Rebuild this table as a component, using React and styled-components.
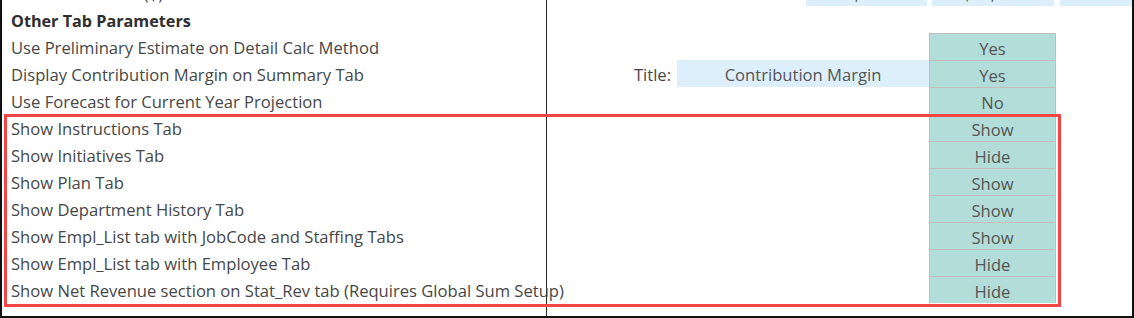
import React from "react";
import styled, { createGlobalStyle } from "styled-components";

const Global = createGlobalStyle`
  html, body { margin: 0; padding: 0; background: #fff; }
  body { font-family: "Open Sans", "Noto Sans", sans-serif; }
`;

const Frame = styled.div`
  width: 1134px;
  height: 318px;
  box-sizing: border-box;
  border-left: 2px solid #111;
  border-right: 2px solid #111;
  border-bottom: 2px solid #111;
  overflow: hidden;
  background: #fff;
  display: flex;
  flex-direction: column;
`;

const Row = styled.div`
  display: grid;
  grid-template-columns: 545px 382px 127px 1fr;
  height: 27px;
  flex: none;
  margin-top: ${(p) => p.$offset || 0}px;
`;

const Label = styled.div`
  border-right: 1px solid #2a2a2a;
  padding-left: 9px;
  padding-top: 2px;
  box-sizing: border-box;
  display: flex;
  align-items: center;
  font-size: ${(p) => (p.$bold ? "16.2px" : "16.6px")};
  letter-spacing: 0;
  color: ${(p) => (p.$bold ? "#2e2e2e" : "#474747")};
  font-weight: ${(p) => (p.$bold ? 700 : 400)};
  white-space: nowrap;
  overflow: visible;
  position: relative;
  z-index: 0;
`;

const Middle = styled.div`
  display: grid;
  grid-template-columns: 1fr ${(p) => (p.$narrow ? "123px" : "252px")};
  align-items: stretch;
  position: relative;
  z-index: 1;
`;

const TitleText = styled.div`
  display: flex;
  align-items: center;
  justify-content: flex-end;
  padding-right: 6px;
  padding-top: 2px;
  font-size: 16.6px;
  color: #474747;
`;

const BlueCell = styled.div`
  background: ${(p) => (p.$empty ? "transparent" : "#ddeffb")};
  display: flex;
  align-items: center;
  justify-content: center;
  padding-top: 2px;
  font-size: 16.6px;
  color: #555;
  margin-right: ${(p) => (p.$top ? "2px" : "0")};
`;

const ValueCell = styled.div`
  background: ${(p) => (p.$empty ? "transparent" : p.$blue ? "#ddeffb" : "#b2ddd9")};
  border: ${(p) => (p.$empty || p.$blue ? "none" : "1px solid #c3bcbc")};
  border-bottom: none;
  margin-left: ${(p) => (p.$blue ? "3px" : "0")};
  margin-right: ${(p) => (p.$blue ? "2px" : "0")};
  box-sizing: border-box;
  display: flex;
  align-items: center;
  justify-content: center;
  padding-top: 2px;
  font-size: 16.6px;
  color: #555;
`;

const RestCell = styled.div`
  background: ${(p) => (p.$blue ? "#ddeffb" : "transparent")};
  margin-left: ${(p) => (p.$blue ? "4px" : "0")};
`;

const Group = styled.div`
  position: relative;
  display: flex;
  flex-direction: column;
  flex: none;
  &::after {
    content: "";
    position: absolute;
    left: 2px;
    top: 0;
    width: 1057px;
    height: 193px;
    box-sizing: border-box;
    border: 3.5px solid #f24646;
    pointer-events: none;
    z-index: 5;
  }
`;

const Tail = styled.div`
  flex: 1;
  display: grid;
  grid-template-columns: 545px 1fr;
`;

const TailLeft = styled.div`
  border-right: 1px solid #2a2a2a;
`;

const ItemRow = ({ label, value, bold, title, titleValue }) => (
  <Row>
    <Label $bold={bold}>{label}</Label>
    <Middle>
      <TitleText>{title}</TitleText>
      <BlueCell $empty={!titleValue}>{titleValue}</BlueCell>
    </Middle>
    <ValueCell $empty={!value}>{value}</ValueCell>
    <RestCell />
  </Row>
);

const topRows = [
  { label: "Use Preliminary Estimate on Detail Calc Method", value: "Yes" },
  {
    label: "Display Contribution Margin on Summary Tab",
    value: "Yes",
    title: "Title:",
    titleValue: "Contribution Margin",
  },
  { label: "Use Forecast for Current Year Projection", value: "No" },
];

const boxedRows = [
  { label: "Show Instructions Tab", value: "Show" },
  { label: "Show Initiatives Tab", value: "Hide" },
  { label: "Show Plan Tab", value: "Show" },
  { label: "Show Department History Tab", value: "Show" },
  { label: "Show Empl_List tab with JobCode and Staffing Tabs", value: "Show" },
  { label: "Show Empl_List tab with Employee Tab", value: "Hide" },
  {
    label: "Show Net Revenue section on Stat_Rev tab (Requires Global Sum Setup)",
    value: "Hide",
  },
];

export default function App() {
  return (
    <>
      <Global />
      <Frame>
        <Row $offset={-21}>
          <Label>Dollar Threshold ($)</Label>
          <Middle $narrow>
            <TitleText />
            <BlueCell $top>1,000</BlueCell>
          </Middle>
          <ValueCell $blue>$25,000</ValueCell>
          <RestCell $blue />
        </Row>
        <ItemRow label="Other Tab Parameters" bold />
        {topRows.map((r) => (
          <ItemRow key={r.label} {...r} />
        ))}
        <Group>
          {boxedRows.map((r) => (
            <ItemRow key={r.label} {...r} />
          ))}
        </Group>
        <Tail>
          <TailLeft />
          <div />
        </Tail>
      </Frame>
    </>
  );
}
